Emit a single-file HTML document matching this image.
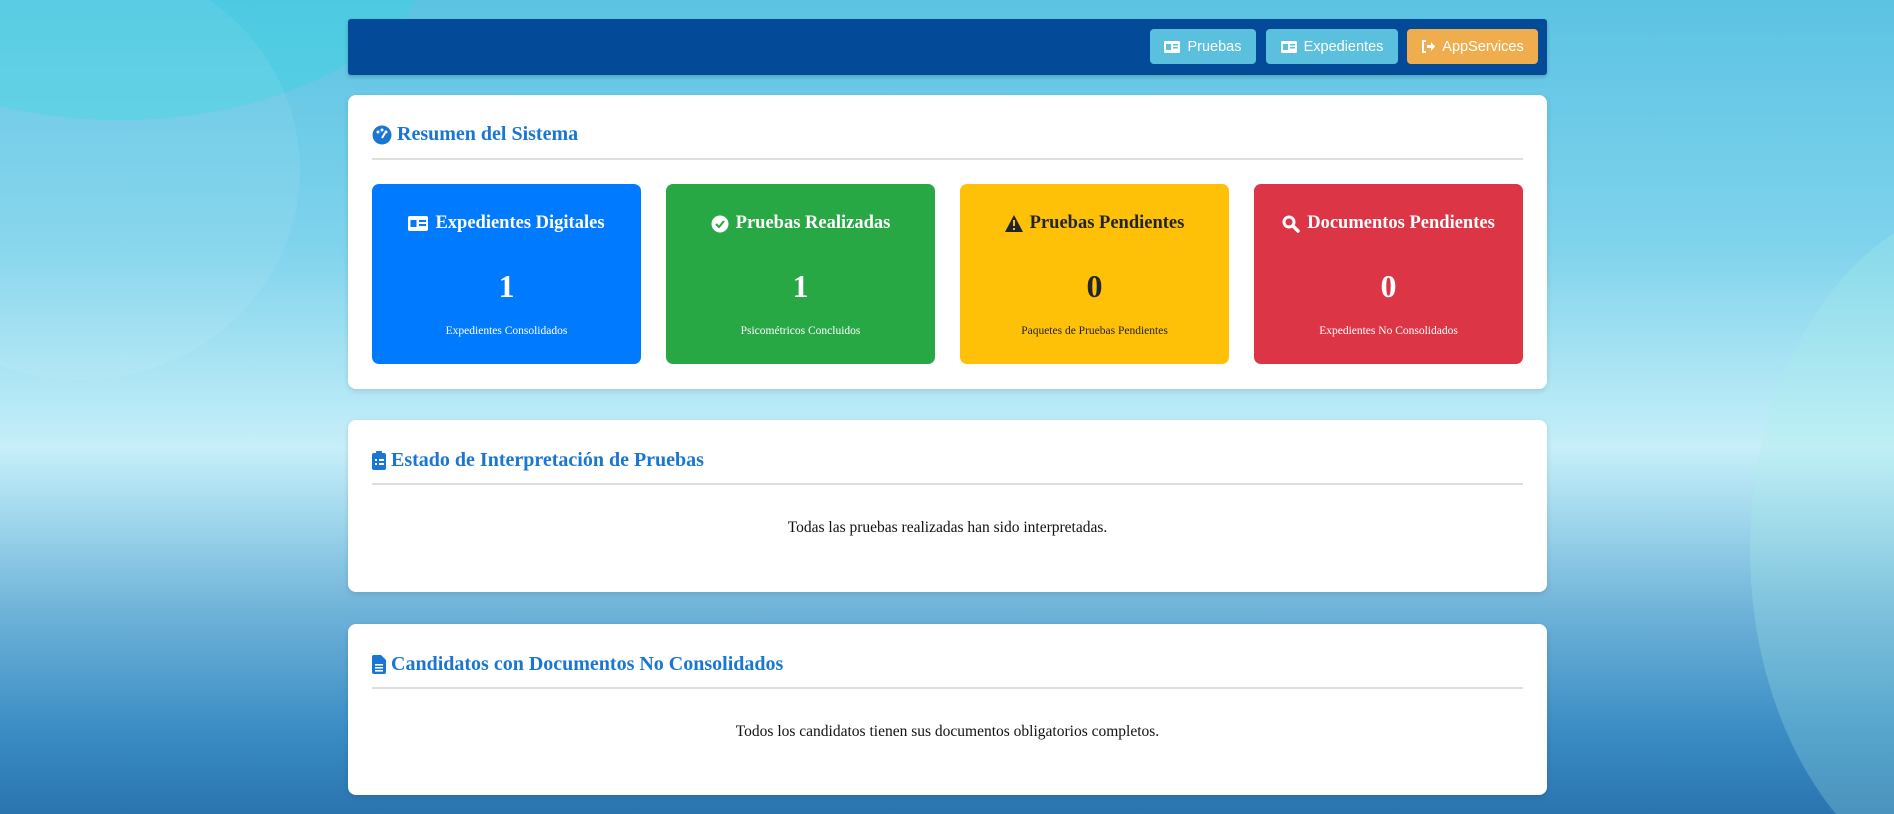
<!DOCTYPE html>
<html><head><meta charset="utf-8"><style>
*{box-sizing:border-box;margin:0;padding:0}
html,body{width:1894px;height:814px;overflow:hidden}
body{font-family:"Liberation Serif",serif}
.wrap{position:absolute;left:0;top:0;width:1894px;height:814px;overflow:hidden;
background:linear-gradient(180deg,#5cc3e3 0%,#7fd3ec 30%,#c6eff9 55%,#9fd6ec 64%,#6fb3d9 75%,#3a8cc4 90%,#2a74b0 100%)}
.blob{position:absolute;border-radius:50%}
.nav{position:absolute;left:348px;top:19px;width:1199px;height:56px;background:#034a98;border-radius:3px;box-shadow:0 2px 4px rgba(0,0,0,.2)}
.btn{position:absolute;top:10px;height:35px;border-radius:4px;color:#fff;font-family:"Liberation Sans",sans-serif;font-size:14.5px;display:flex;align-items:center;justify-content:center;gap:7px}
.card{position:absolute;left:348px;width:1199px;background:#fff;border-radius:8px;box-shadow:0 2px 6px rgba(0,0,0,.12)}
.h{position:absolute;left:24px;color:#1976d2;font-weight:bold;font-size:20px;display:flex;align-items:center;gap:5px}
.hr{position:absolute;left:24px;right:24px;height:2px;background:#dedede}
.stat{position:absolute;top:89px;width:269px;height:180px;border-radius:7px;color:#fff;text-align:center}
.stat .t{position:absolute;top:29px;left:0;right:0;font-weight:bold;font-size:18.5px;display:flex;justify-content:center;align-items:center;gap:7px}
.stat .n{position:absolute;top:84px;left:0;right:0;font-weight:bold;font-size:32px}
.stat .s{position:absolute;top:141px;left:0;right:0;font-size:11.5px}
.msg{position:absolute;left:0;right:0;text-align:center;font-size:15.5px;color:#111}
</style></head><body><div class="wrap">
<div class="blob" style="left:-200px;top:-260px;width:640px;height:380px;background:rgba(60,210,225,.45)"></div>
<div class="blob" style="left:-140px;top:-40px;width:440px;height:420px;background:rgba(255,255,255,.07)"></div>
<div class="blob" style="left:1750px;top:200px;width:500px;height:700px;background:rgba(170,240,230,.25)"></div>

<div class="nav">
 <div class="btn" style="left:802px;width:106px;background:#5bc0de"><svg width="16" height="12"><rect width="16" height="12" rx="1.5" fill="#fff"/><rect x="2" y="3" width="5" height="6" fill="#5bc0de"/><rect x="9" y="3" width="5" height="1.5" fill="#5bc0de"/><rect x="9" y="6" width="5" height="1.5" fill="#5bc0de"/></svg>Pruebas</div>
 <div class="btn" style="left:918px;width:132px;background:#5bc0de"><svg width="16" height="12"><rect width="16" height="12" rx="1.5" fill="#fff"/><rect x="2" y="3" width="5" height="6" fill="#5bc0de"/><rect x="9" y="3" width="5" height="1.5" fill="#5bc0de"/><rect x="9" y="6" width="5" height="1.5" fill="#5bc0de"/></svg>Expedientes</div>
 <div class="btn" style="left:1059px;width:131px;background:#f0ad4e"><svg width="14" height="13"><path d="M5 1H2v11h3" stroke="#fff" stroke-width="2" fill="none"/><path d="M6 5h4V2l4 4.5L10 11V8H6z" fill="#fff"/></svg>AppServices</div>
</div>

<div class="card" style="top:95px;height:294px">
 <div class="h" style="top:28px"><svg width="20" height="20"><circle cx="10" cy="10" r="9.5" fill="#1976d2"/><circle cx="6" cy="7" r="1.5" fill="#fff"/><circle cx="10" cy="5" r="1.5" fill="#fff"/><circle cx="14" cy="7" r="1.5" fill="#fff"/><path d="M10 13l3-5" stroke="#fff" stroke-width="2"/></svg>Resumen del Sistema</div>
 <div class="hr" style="top:63px"></div>
 <div class="stat" style="left:24px;background:#007bff"><div class="t"><svg width="20" height="15"><rect width="20" height="15" rx="2" fill="#fff"/><rect x="2.5" y="4" width="6" height="7" fill="#007bff"/><rect x="11" y="4" width="7" height="2" fill="#007bff"/><rect x="11" y="8" width="7" height="2" fill="#007bff"/></svg>Expedientes Digitales</div><div class="n">1</div><div class="s">Expedientes Consolidados</div></div>
 <div class="stat" style="left:318px;background:#28a745"><div class="t"><svg width="18" height="18"><circle cx="9" cy="9" r="8.5" fill="#fff"/><path d="M5 9l3 3 5-6" stroke="#28a745" stroke-width="2" fill="none"/></svg>Pruebas Realizadas</div><div class="n">1</div><div class="s">Psicométricos Concluidos</div></div>
 <div class="stat" style="left:612px;background:#ffc107;color:#212529"><div class="t"><svg width="18" height="17"><path d="M9 0L18 17H0z" fill="#212529"/><rect x="8" y="5" width="2" height="6" fill="#ffc107"/><rect x="8" y="13" width="2" height="2" fill="#ffc107"/></svg>Pruebas Pendientes</div><div class="n">0</div><div class="s">Paquetes de Pruebas Pendientes</div></div>
 <div class="stat" style="left:906px;background:#dc3545"><div class="t"><svg width="18" height="18"><circle cx="7" cy="7" r="5" stroke="#fff" stroke-width="3" fill="none"/><path d="M11 11l5 5" stroke="#fff" stroke-width="3.5" stroke-linecap="round"/></svg>Documentos Pendientes</div><div class="n">0</div><div class="s">Expedientes No Consolidados</div></div>
</div>

<div class="card" style="top:420px;height:172px">
 <div class="h" style="top:29px"><svg width="14" height="19"><rect y="2" width="14" height="17" rx="2" fill="#1976d2"/><rect x="4" y="0" width="6" height="4" rx="1" fill="#1976d2"/><rect x="3" y="8" width="2" height="2" fill="#fff"/><rect x="7" y="8" width="5" height="2" fill="#fff"/><rect x="3" y="12" width="2" height="2" fill="#fff"/><rect x="7" y="12" width="5" height="2" fill="#fff"/></svg>Estado de Interpretación de Pruebas</div>
 <div class="hr" style="top:63px"></div>
 <div class="msg" style="top:99px">Todas las pruebas realizadas han sido interpretadas.</div>
</div>

<div class="card" style="top:624px;height:171px">
 <div class="h" style="top:29px"><svg width="14" height="19"><path d="M0 2a2 2 0 012-2h7l5 5v12a2 2 0 01-2 2H2a2 2 0 01-2-2z" fill="#1976d2"/><rect x="3" y="9" width="8" height="1.6" fill="#fff"/><rect x="3" y="12" width="8" height="1.6" fill="#fff"/><rect x="3" y="15" width="8" height="1.6" fill="#fff"/></svg>Candidatos con Documentos No Consolidados</div>
 <div class="hr" style="top:63px"></div>
 <div class="msg" style="top:99px">Todos los candidatos tienen sus documentos obligatorios completos.</div>
</div>
</div></body></html>
